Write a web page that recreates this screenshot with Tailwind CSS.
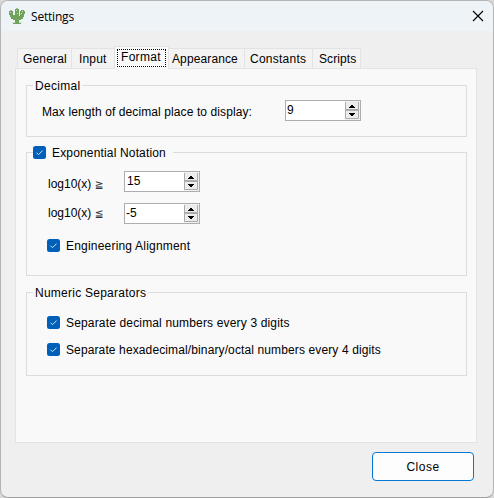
<!DOCTYPE html>
<html lang="en">
<head>
<meta charset="utf-8">
<title>Settings</title>
<script src="https://cdn.jsdelivr.net/npm/@tailwindcss/browser@4"></script>
</head>
<body class="w-[494px] h-[498px] overflow-hidden bg-[#d9d9d9] text-black text-[12px] leading-[15px] whitespace-nowrap font-['Liberation_Sans',Arial,sans-serif]">
<svg class="hidden">
  <symbol id="check" viewBox="0 0 13 13"><rect width="13" height="13" rx="2.5" fill="#005fb8"/><path d="M3.5 6.7 5.5 8.7 9.6 4.6" fill="none" stroke="#d5e6f5" stroke-width="1"/></symbol>
  <symbol id="arrows" viewBox="0 0 15 19"><rect width="15" height="19" fill="#f0f0f0"/><path d="M1 1H14V8H1zM1 10H14V17H1z" fill="#ececec"/><path d="M.5 1V17.5H13.5V1" fill="none" stroke="#acacac"/><path d="M0 9H14" stroke="#acacac" stroke-width="2"/><path d="M6 4H8V5H9V6H10V7H4V6H5V5H6zM4 12H10V13H9V14H8V15H6V14H5V13H4z" fill="#000"/></symbol>
</svg>
<main class="w-[494px] h-[498px] rounded-[8px] border border-[#b4b4b4] border-b-[#a0a0a0] bg-[#efefef] overflow-hidden flex flex-col">
  <header class="h-[30px] shrink-0 bg-[#edf3f7] flex items-center pl-2 pr-[9px]">
    <svg width="16" height="16" viewBox="0 0 16 16" shape-rendering="crispEdges" class="shrink-0 -mt-px"><path d="M6 1H10V8H11V3H12V2H15V3H16V6H15V9H14V11H12V12H10V14H12V16H4V14H6V12H4V11H2V9H1V7H0V3H4V7H6z" fill="#6fa35c"/><path d="M7 0H9V1H7zM1 2H3V3H1z" fill="#9ebd93"/><path d="M7 2H8V3H7zM8 5H9V6H8zM1 4H2V5H1zM13 3H14V4H13zM12 5H13V6H12zM3 14H6V15H3zM10 14H13V15H10z" fill="#cfe0cb"/></svg>
    <h1 class="ml-[6px] font-['Open_Sans','Noto_Sans',sans-serif] text-[12px] tracking-[-0.2px]">Settings</h1>
    <svg class="ml-auto mt-[-1px]" width="12" height="12" viewBox="0 0 12 12"><path d="M1 1 11 11M11 1 1 11" stroke="#000" stroke-width="1.1"/></svg>
  </header>
  <nav class="h-[37px] shrink-0 pl-4 flex items-end">
    <div class="w-[55px] h-5 bg-[#f3f3f3] border border-[#e3e3e3] border-b-0 pl-[5px] pt-[3px] tracking-[0.18px]">General</div>
    <div class="w-[42px] h-5 bg-[#f3f3f3] border-t border-[#e3e3e3] pl-[7px] pt-[3px] tracking-[0.15px]">Input</div>
    <div class="w-[55px] h-[23px] -mb-px bg-[#f9f9f9] border border-[#e3e3e3] border-b-0 p-[2px] pt-[2px] z-10"><div class="h-[18px] w-[49px] border border-dotted border-black pl-[3px] tracking-[0.3px]">Format</div></div>
    <div class="w-[75px] h-5 bg-[#f3f3f3] border-t border-[#e3e3e3] pl-[3px] pt-[3px] tracking-[0.12px]">Appearance</div>
    <div class="w-[69px] h-5 bg-[#f3f3f3] border border-[#e3e3e3] border-b-0 pl-[5px] pt-[3px] tracking-[0.25px]">Constants</div>
    <div class="w-[48px] h-5 bg-[#f3f3f3] border-t border-r border-[#e3e3e3] pl-[6px] pt-[3px] tracking-[0.1px]">Scripts</div>
  </nav>
  <section class="ml-[14px] w-[462px] h-[375px] shrink-0 bg-[#f9f9f9] border border-[#e3e3e3] pl-[10px] pt-[9px]">
    <fieldset class="w-[441px] h-[59px] border border-[#dcdcdc] pl-[14px]">
      <legend class="ml-[-8px] h-[15px] leading-[17px] px-[2px] tracking-[0.3px]">Decimal</legend>
      <div class="flex pt-[7px]">
        <label class="w-[244px] pt-[5px] pl-px tracking-[0.1px]">Max length of decimal place to display:</label>
        <div class="w-[76px] h-[21px] bg-white border border-[#abadb3] flex justify-between pl-[1px] pt-[2px]"><span>9</span><svg class="-mt-[2px] shrink-0" width="15" height="19"><use href="#arrows"/></svg></div>
      </div>
    </fieldset>
    <fieldset class="mt-[8px] w-[441px] h-[131px] border border-[#dcdcdc] pl-5">
      <legend class="ml-[-14px] h-[15px] pr-[7px]"><label class="flex items-center"><svg width="13" height="13"><use href="#check"/></svg><span class="ml-[6px] pt-px -mb-px tracking-[0.16px]">Exponential Notation</span></label></legend>
      <div class="flex pt-[11px]">
        <label class="w-[77px] h-[21px] pt-[6px] pl-px leading-[15px]">log10(x) <span class="text-[10.5px] leading-[10px] font-['DejaVu_Sans',sans-serif] text-[#333]">≧</span></label>
        <div class="w-[76px] h-[21px] bg-white border border-[#abadb3] flex justify-between pl-[2px] pt-[2px]"><span>15</span><svg class="-mt-[2px] shrink-0" width="15" height="19"><use href="#arrows"/></svg></div>
      </div>
      <div class="flex pt-[11px]">
        <label class="w-[77px] h-[21px] pt-[3px] pl-px leading-[15px]">log10(x) <span class="text-[10.5px] leading-[10px] font-['DejaVu_Sans',sans-serif] text-[#333]">≦</span></label>
        <div class="w-[76px] h-[21px] bg-white border border-[#abadb3] flex justify-between pl-[1px] pt-[2px]"><span>-5</span><svg class="-mt-[2px] shrink-0" width="15" height="19"><use href="#arrows"/></svg></div>
      </div>
      <label class="flex items-center pt-[14px]"><svg width="13" height="13"><use href="#check"/></svg><span class="ml-[6px] pt-px -mb-px tracking-[0.2px]">Engineering Alignment</span></label>
    </fieldset>
    <fieldset class="mt-[9px] w-[441px] h-[91px] border border-[#dcdcdc] pl-5">
      <legend class="ml-[-14px] h-[15px] leading-[17px] px-[2px] tracking-[0.25px]">Numeric Separators</legend>
      <label class="flex items-center pt-[15px]"><svg width="13" height="13"><use href="#check"/></svg><span class="ml-[6px] pt-px -mb-px tracking-[0.16px]">Separate decimal numbers every 3 digits</span></label>
      <label class="flex items-center pt-[12px]"><svg width="13" height="13"><use href="#check"/></svg><span class="ml-[6px] pt-px -mb-px tracking-[0.12px]">Separate hexadecimal/binary/octal numbers every 4 digits</span></label>
    </fieldset>
  </section>
  <footer class="flex justify-end pr-[19px] pt-[9px]">
    <button class="w-[102px] h-[29px] rounded-[4px] border border-[#0078d4] bg-[#fdfdfd] tracking-[0.5px] pb-0 pt-px">Close</button>
  </footer>
</main>
</body>
</html>
